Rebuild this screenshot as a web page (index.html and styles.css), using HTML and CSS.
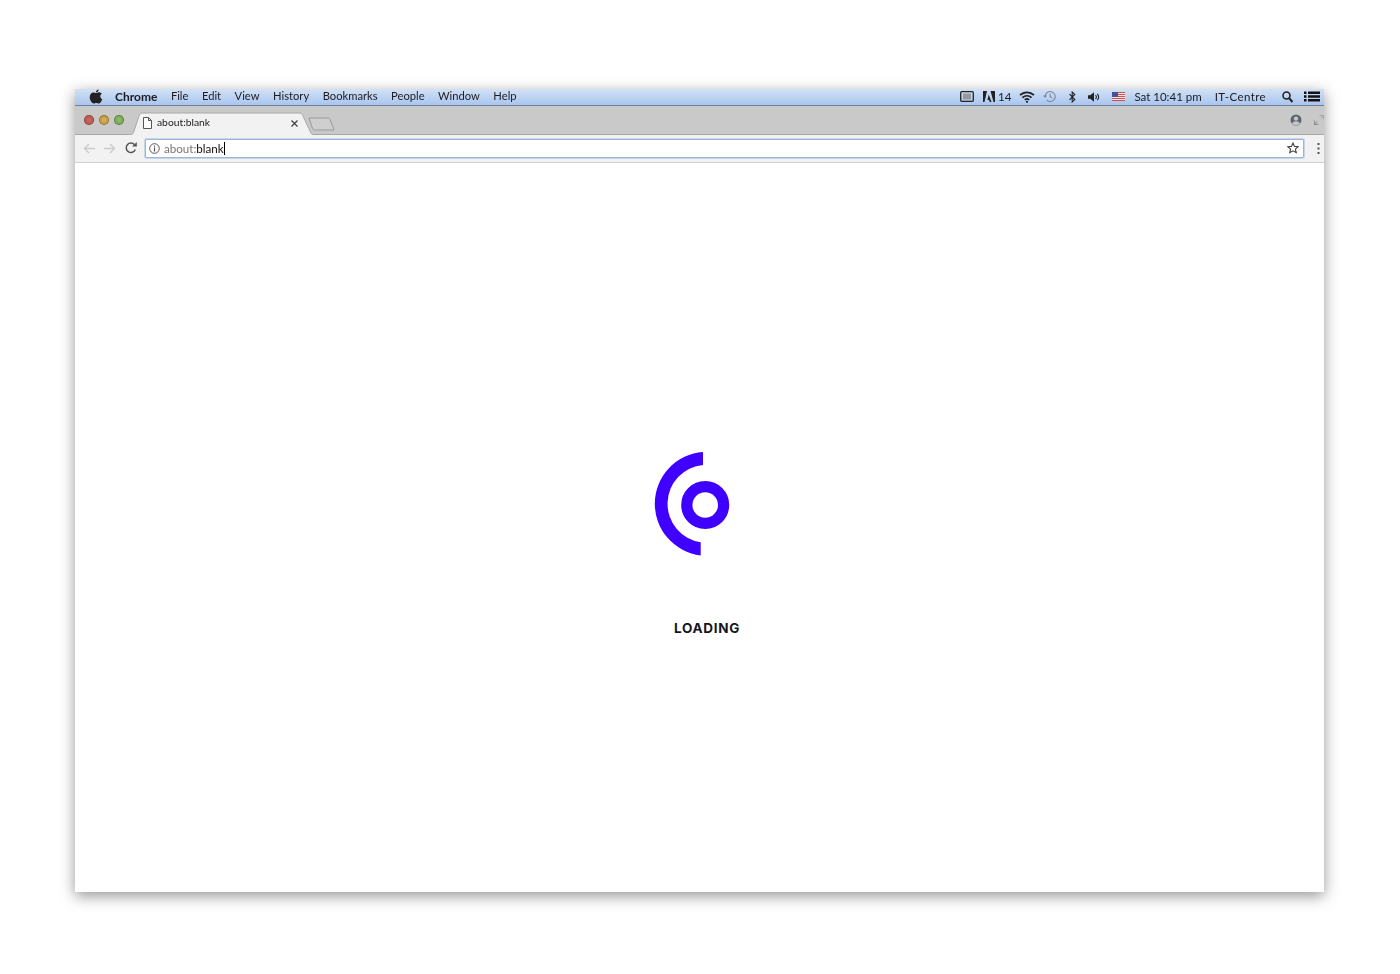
FILE: index.html
```html
<!DOCTYPE html>
<html lang="en">
<head>
  <meta charset="UTF-8" />
  <title>about:blank</title>
  <link rel="stylesheet" href="styles.css">
</head>
<body>
  <div class="window">
    <!-- mac menu bar -->
    <div class="menubar">
      <svg class="apple" width="14" height="15" viewBox="0 0 14 15"><path fill="#222" d="M9.6 0.4c.1 1.3-1.1 2.9-2.7 2.9C6.800 1.900 8.100 .5 9.600 .4zM7 4.100c.7 0 1.600-.8 3-.8 1 0 2.100.5 2.800 1.500-2.200 1.300-1.900 4.400.5 5.400-.6 1.600-2 4.300-3.400 4.300-.9 0-1.300-.6-2.500-.6s-1.700.6-2.500.6C3 14.500.7 11.300.7 8.300c0-3 1.900-4.900 3.700-4.900 1.100 0 2 .7 2.600.7z"/></svg>
      <ul class="menu">
        <li class="app-name">Chrome</li>
        <li>File</li>
        <li>Edit</li>
        <li>View</li>
        <li>History</li>
        <li>Bookmarks</li>
        <li>People</li>
        <li>Window</li>
        <li>Help</li>
      </ul>
      <div class="status">
        <svg class="st-screen" width="14" height="11" viewBox="0 0 14 11"><rect x=".7" y=".7" width="12.600" height="9.600" rx="1" fill="none" stroke="#222" stroke-width="1.300"/><rect x="3" y="2.500" width="8" height="6" fill="#999"/></svg>
        <svg class="st-adobe" width="12" height="11" viewBox="0 0 12 11"><path fill="#222" d="M0 0h4L1.500 11H0zM7.500 0H12v11h-1.500zM5.700 3.500L8.500 11H6.700L6 9H4.500z"/></svg>
        <span class="st-count">14</span>
        <svg class="st-wifi" width="16" height="12" viewBox="0 0 16 12"><g fill="none" stroke="#222" stroke-width="1.700"><path d="M1 4.200a10 10 0 0 1 14 0"/><path d="M3.400 6.600a6.600 6.600 0 0 1 9.200 0"/><path d="M5.800 9a3.200 3.200 0 0 1 4.400 0"/></g><circle cx="8" cy="10.800" r="1.100" fill="#222"/></svg>
        <svg class="st-clock" width="14" height="13" viewBox="0 0 14 13"><g fill="none" stroke="#7d8796" stroke-width="1.100"><path d="M2.200 6.500a5 5 0 1 1 1.500 3.600"/><path d="M7.200 3.500v3.200l2 1.200"/></g><path fill="#7d8796" d="M0 5.500h4.200L2.100 8z"/></svg>
        <svg class="st-bt" width="7" height="12" viewBox="0 0 7 12"><path fill="none" stroke="#222" stroke-width="1.100" d="M.5 3.200l5.300 5.400L3.200 11V1l2.600 2.400L.5 8.800"/></svg>
        <svg class="st-sound" width="12" height="10" viewBox="0 0 12 10"><path fill="#222" d="M0 3.200h2.200L6 .3v9.400L2.200 6.800H0z"/><path fill="none" stroke="#222" stroke-width="1.100" d="M7.500 3a3 3 0 0 1 0 4M9.300 1.800a5 5 0 0 1 0 6.400"/></svg>
        <svg class="st-flag" width="13" height="9" viewBox="0 0 13 9"><rect width="13" height="9" fill="#f1e6e6"/><path fill="#c8524f" d="M0 0h13v1H0zM0 2h13v1H0zM0 4h13v1H0zM0 6h13v1H0zM0 8h13v1H0z"/><rect width="6" height="5" fill="#47519a"/></svg>
        <span class="st-clocktext">Sat 10:41 pm</span>
        <span class="st-user">IT-Centre</span>
        <svg class="st-search" width="11" height="12" viewBox="0 0 11 12"><circle cx="4.500" cy="4.500" r="3.500" fill="none" stroke="#222" stroke-width="1.600"/><path stroke="#222" stroke-width="2" d="M7 7l3.500 4"/></svg>
        <svg class="st-list" width="16" height="11" viewBox="0 0 16 11"><path fill="#111" d="M0 .5h2.500V3H0zM4 .5h12V3H4zM0 4.300h2.500v2.400H0zM4 4.300h12v2.400H4zM0 8h2.500v2.500H0zM4 8h12v2.500H4z"/></svg>
      </div>
    </div>

    <!-- tab strip -->
    <div class="tabstrip">
      <div class="traffic">
        <span class="light red"></span>
        <span class="light yellow"></span>
        <span class="light green"></span>
      </div>
      <div class="tab">
        <svg class="tab-bg" width="187" height="28" viewBox="0 0 187 28"><path fill="#f2f2f2" stroke="#a8a8a8" d="M0 28c3 0 4-1 5-4L10 9c.5-2 2-3 4-3h156c2 0 3.500 1 4 3l7 15c1 3 2 4 5 4"/></svg>
        <svg class="tab-doc" width="9" height="12" viewBox="0 0 9 12"><path fill="#fff" stroke="#555" d="M.5.5h5l3 3v8h-8zM5.500.5v3h3"/></svg>
        <span class="tab-title">about:blank</span>
        <svg class="tab-close" width="7" height="7" viewBox="0 0 7 7"><path stroke="#444" stroke-width="1.300" d="M.5.500l6 6M6.500.500l-6 6"/></svg>
      </div>
      <svg class="newtab" width="27" height="14" viewBox="0 0 27 14"><path fill="#cfcfcf" stroke="#9a9a9a" d="M1 1h19c1 0 1.500.5 2 1.500L26 13H6.500c-1 0-1.500-.5-2-1.500z"/></svg>
      <div class="strip-right">
        <svg width="12" height="12" viewBox="0 0 12 12"><circle cx="6" cy="6" r="5.500" fill="#5e646d"/><circle cx="6" cy="4.600" r="2.200" fill="#c4c6c9"/><path fill="#c4c6c9" d="M2 9.500c.8-1.600 2.200-2.300 4-2.300s3.200.7 4 2.300c-1 1-2.400 1.500-4 1.500s-3-.5-4-1.500z"/></svg>
        <svg width="10" height="10" viewBox="0 0 10 10"><path fill="#8a8f96" d="M0 5.500h1v2.700L3 6.300l.7.700-2 2H4.500v1H0z"/><path fill="#a5a9ae" d="M10 0v4.500H9V1.800L7 3.700 6.300 3l2-2H5.500V0z"/></svg>
      </div>
    </div>

    <!-- toolbar -->
    <div class="toolbar">
      <svg class="nav nav-back" width="12" height="11" viewBox="0 0 12 11"><path fill="none" stroke="#ccc" stroke-width="1.400" d="M12 5.500H1.500M6 1L1.500 5.500 6 10"/></svg>
      <svg class="nav nav-forward" width="12" height="11" viewBox="0 0 12 11"><path fill="none" stroke="#ccc" stroke-width="1.400" d="M0 5.500h10.500M6 1l4.500 4.500L6 10"/></svg>
      <svg class="nav nav-reload" width="12" height="12" viewBox="0 0 12 12"><path fill="none" stroke="#555" stroke-width="1.500" d="M10.300 7.500A4.700 4.700 0 1 1 9.500 2.700"/><path fill="#555" d="M7 4.500h4.800V0z"/></svg>
      <div class="omnibox">
        <svg class="info" width="11" height="11" viewBox="0 0 11 11"><circle cx="5.500" cy="5.500" r="4.800" fill="none" stroke="#555"/><path stroke="#555" stroke-width="1.200" d="M5.500 4.600v3.800M5.500 2.500v1.200"/></svg>
        <span class="url-scheme">about:</span><span class="url-path">blank</span><span class="caret"></span>
        <svg class="star" width="12" height="12" viewBox="0 0 12 12"><path fill="none" stroke="#444" stroke-width="1.100" d="M6 1l1.500 3.400 3.700.3-2.800 2.400.9 3.600L6 8.800l-3.300 1.900.9-3.600L.8 4.700l3.700-.3z"/></svg>
      </div>
      <svg class="dots" width="3" height="11" viewBox="0 0 3 11"><path fill="#555" d="M.5 0h2v2h-2zM.5 4.500h2v2h-2zM.5 9h2v2h-2z"/></svg>
    </div>

    <!-- page -->
    <main class="page">
      <svg class="logo" width="76" height="106" viewBox="0 0 76 106">
        <path fill="#4000ff" d="M49 .9A52 52 0 0 0 46.700 104.400V91.300A39 39 0 0 1 49 13.900z"/>
        <circle cx="51.200" cy="54" r="18.400" fill="none" stroke="#4000ff" stroke-width="11.200"/>
      </svg>
      <div class="loading">LOADING</div>
    </main>
  </div>
</body>
</html>
```

FILE: styles.css
```css
html, body { margin: 0; padding: 0; background: #fff; }
body { font-family: Lato, sans-serif; padding: 89px 0 0 75px; height: 885px; overflow: hidden; }
svg { display: block; flex: none; }

.window { width: 1249px; height: 803px; display: flex; flex-direction: column; background: #fff; box-shadow: 0 4px 14px rgba(0,0,0,.42); }

/* menu bar */
.menubar { height: 17px; box-sizing: border-box; padding: 0 4px 1px 14px; display: flex; align-items: center; background: linear-gradient(#d2e1f6, #a9c5ee); border-bottom: 1px solid #6f8099; color: #1c1c22; font-size: 11.200px; filter: blur(.3px); }
.menu { list-style: none; margin: 0 0 0 12px; padding: 0; display: flex; gap: 13.500px; }
.app-name { font-weight: bold; font-size: 12px; }
.status { margin-left: auto; display: flex; align-items: center; font-size: 11.500px; }
.st-adobe { margin-left: 9px; }
.st-count { margin-left: 3px; }
.st-wifi { margin-left: 8px; }
.st-clock { margin-left: 8px; }
.st-bt { margin-left: 12px; }
.st-sound { margin-left: 12px; }
.st-flag { margin-left: 12px; }
.st-clocktext { margin-left: 9px; }
.st-user { margin-left: 13px; letter-spacing: .4px; }
.st-search { margin-left: 16px; }
.st-list { margin-left: 11px; }

/* tabs */
.tabstrip { height: 28px; display: flex; align-items: flex-end; background: #c9c9c9; border-bottom: 1px solid #a8a8a8; filter: blur(.3px); }
.traffic { display: flex; gap: 5px; padding: 0 0 9px 9px; width: 47px; box-sizing: border-box; align-self: flex-end; }
.light { width: 10px; height: 10px; border-radius: 50%; flex: none; box-shadow: inset 0 0 0 1px rgba(0,0,0,.25), inset 0 0 0 3px rgba(120,60,40,.15); }
.red { background: #c9645f; }
.yellow { background: #d8b04f; }
.green { background: #7fc264; }
.tab { position: relative; width: 187px; height: 28px; box-sizing: border-box; padding-top: 4px; margin-left: 7px; margin-bottom: -1px; display: flex; align-items: center; }
.tab-bg { position: absolute; left: 0; top: 0; }
.tab-doc, .tab-title, .tab-close { position: relative; }
.tab-doc { margin-left: 14px; }
.tab-title { margin: 0 0 2px 5px; font-size: 10.300px; color: #222; }
.tab-close { margin-left: auto; margin-right: 18px; }
.newtab { margin: 0 0 3px -8px; }
.strip-right { margin-left: auto; display: flex; align-items: center; gap: 12px; padding: 0 0 8px 0; align-self: flex-end; }

/* toolbar */
.toolbar { height: 28px; box-sizing: border-box; padding-bottom: 1px; display: flex; align-items: center; background: #f2f2f2; border-bottom: 1px solid #d0d0d0; filter: blur(.3px); }
.nav-back { margin-left: 8px; }
.nav-forward { margin-left: 9px; }
.nav-reload { margin-left: 9px; }
.omnibox { flex: 1; height: 17px; margin-left: 8px; display: flex; align-items: center; background: #fff; border: 1px solid #9eb6d6; border-radius: 2px; box-shadow: 0 0 0 1px #c5d5ea; font-size: 11.600px; }
.info { margin: 0 4px 0 3px; }
.url-scheme { color: #777; }
.url-path { color: #111; }
.caret { width: 1px; height: 13px; background: #000; }
.star { margin-left: auto; margin-right: 4px; }
.dots { margin: 0 4px 0 13px; }

/* page */
.page { flex: 1; display: flex; flex-direction: column; align-items: flex-start; padding: 288px 0 0 579px; box-sizing: border-box; }
.logo { overflow: visible; }
.loading { margin: 64px 0 0 20px; font-family: Inter, sans-serif; font-weight: 700; font-size: 13.500px; letter-spacing: .7px; color: #15151f; line-height: 14px; }
```
